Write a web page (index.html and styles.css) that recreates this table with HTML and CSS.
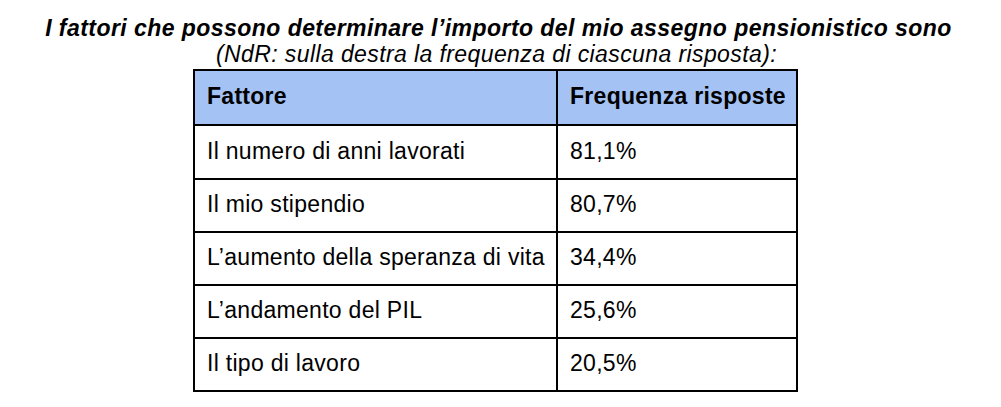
FILE: index.html
```html
<!DOCTYPE html>
<html lang="it">
<head>
<meta charset="utf-8">
<link rel="stylesheet" href="styles.css">
</head>
<body>
<main class="page">
  <h1 class="title">I fattori che possono determinare l’importo del mio assegno pensionistico sono</h1>
  <p class="subtitle">(NdR: sulla destra la frequenza di ciascuna risposta):</p>
  <div class="table">
    <div class="cell head">Fattore</div>
    <div class="cell head">Frequenza risposte</div>
    <div class="cell">Il numero di anni lavorati</div>
    <div class="cell">81,1%</div>
    <div class="cell">Il mio stipendio</div>
    <div class="cell">80,7%</div>
    <div class="cell">L’aumento della speranza di vita</div>
    <div class="cell">34,4%</div>
    <div class="cell">L’andamento del PIL</div>
    <div class="cell">25,6%</div>
    <div class="cell">Il tipo di lavoro</div>
    <div class="cell">20,5%</div>
  </div>
</main>
</body>
</html>
```
FILE: styles.css
```css
html, body {
  margin: 0;
  padding: 0;
  background: #fff;
}
body {
  font-family: "Liberation Sans", Arial, sans-serif;
  color: #000;
}
.page {
  width: 1001px;
  height: 407px;
  display: flex;
  flex-direction: column;
  align-items: center;
  padding: 15px 10px 0 0;
  box-sizing: border-box;
}
.title {
  margin: 0;
  padding-left: 6px;
  font-size: 23px;
  line-height: 26px;
  font-weight: bold;
  font-style: italic;
  letter-spacing: 0.45px;
  white-space: nowrap;
}
.subtitle {
  margin: 1px 0 0;
  padding-left: 2px;
  font-size: 23px;
  line-height: 24px;
  font-style: italic;
  letter-spacing: 0.4px;
  white-space: nowrap;
}
.table {
  margin-top: 3px;
  display: grid;
  grid-template-columns: 363px 240px;
  grid-template-rows: 55px 54px 53px 53px 53px 53px;
  border-top: 2px solid #000;
  border-left: 2px solid #000;
}
.cell {
  display: flex;
  align-items: center;
  padding: 0 0 2px 12px;
  border-right: 2px solid #000;
  border-bottom: 2px solid #000;
  font-size: 23px;
  letter-spacing: 0.29px;
  white-space: nowrap;
}
.head {
  background: #a4c2f4;
  font-weight: bold;
  letter-spacing: 0.28px;
}
```
